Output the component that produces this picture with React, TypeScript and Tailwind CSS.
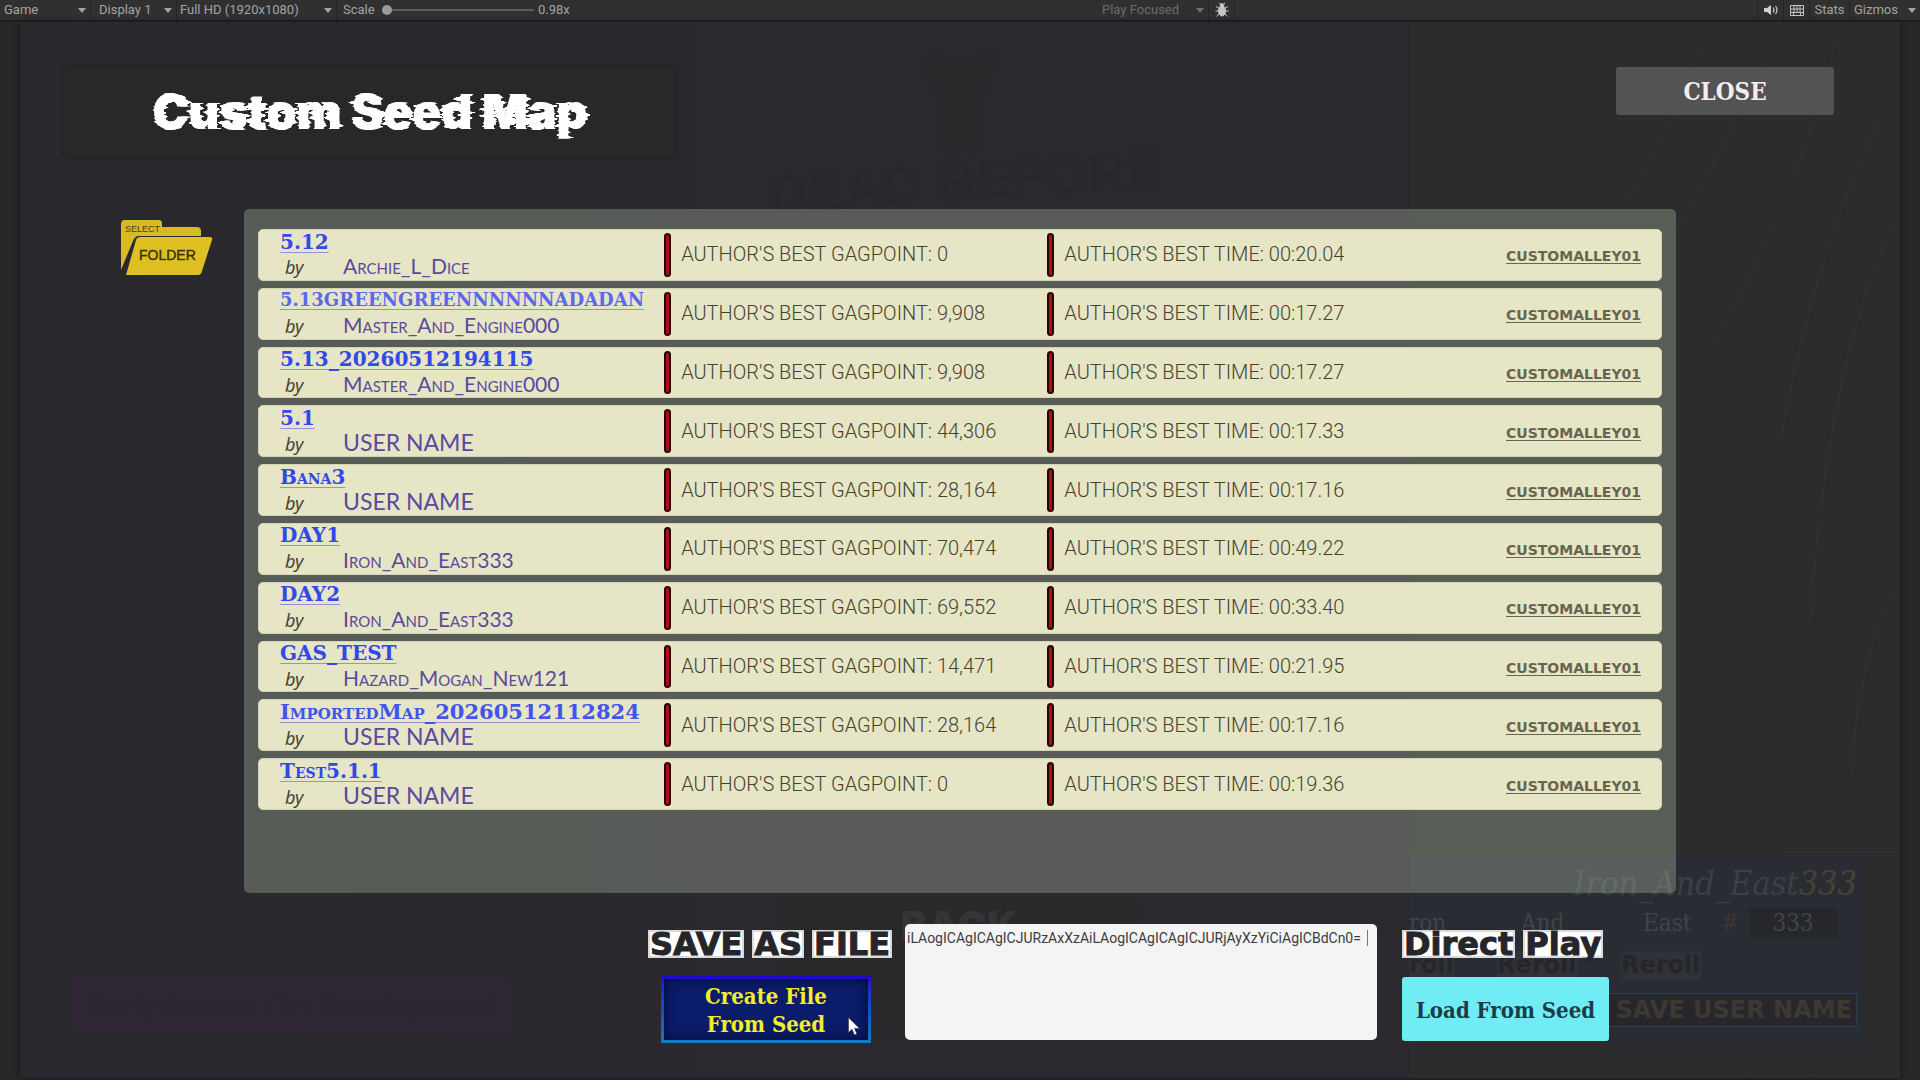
import React, { useState } from "react";

type MapEntry = {
  name: string;
  author: string;
  points: string;
  time: string;
  size?: "fit" | "tight";
};

const MAPS: MapEntry[] = [
  { name: "5.12", author: "Archie_L_Dice", points: "0", time: "00:20.04" },
  { name: "5.13GREENGREENNNNNNADADAN", author: "Master_And_Engine000", points: "9,908", time: "00:17.27", size: "tight" },
  { name: "5.13_20260512194115", author: "Master_And_Engine000", points: "9,908", time: "00:17.27" },
  { name: "5.1", author: "USER NAME", points: "44,306", time: "00:17.33" },
  { name: "Bana3", author: "USER NAME", points: "28,164", time: "00:17.16" },
  { name: "DAY1", author: "Iron_And_East333", points: "70,474", time: "00:49.22" },
  { name: "DAY2", author: "Iron_And_East333", points: "69,552", time: "00:33.40" },
  { name: "GAS_TEST", author: "Hazard_Mogan_New121", points: "14,471", time: "00:21.95" },
  { name: "ImportedMap_20260512112824", author: "USER NAME", points: "28,164", time: "00:17.16", size: "fit" },
  { name: "Test5.1.1", author: "USER NAME", points: "0", time: "00:19.36" },
];

const NAME_SIZES = {
  normal: "text-[20px] text-[#3148ea]",
  fit: "text-[21px] text-[#3f55ec]",
  tight: "text-[18px] text-[#5b68ec]",
};

function Caret() {
  return (
    <svg viewBox="0 0 8 5" className="pointer-events-none absolute right-1 top-2 h-[5px] w-2 fill-current" aria-hidden="true">
      <path d="M0 0h8L4 5z" />
    </svg>
  );
}

function Dropdown({ label, value, className }: { label: string; value: string; className: string }) {
  return (
    <div className={"relative h-full " + className}>
      <select aria-label={label} defaultValue={value} className="block h-full w-full appearance-none bg-transparent leading-5 outline-none">
        <option>{value}</option>
      </select>
      <Caret />
    </div>
  );
}

function Toolbar() {
  return (
    <div className="flex h-[21px] items-center border-b border-[#1b1b1b] bg-[#303030] font-['Roboto','Liberation_Sans',sans-serif] text-[13px] text-[#a3a3a3]">
      <Dropdown label="View" value="Game" className="w-[91px] border-r border-[#242424] pl-1" />
      <Dropdown label="Display" value="Display 1" className="w-[86px] border-r border-[#242424] pl-2" />
      <Dropdown label="Resolution" value="Full HD (1920x1080)" className="w-[160px] border-r border-[#242424] pl-[3px]" />
      <label htmlFor="scale" className="w-[41px] pl-[6px]">Scale</label>
      <input
        id="scale"
        type="range"
        min={0}
        max={100}
        defaultValue={0}
        className="ml-1 h-3 w-[152px] appearance-none bg-transparent [&::-webkit-slider-runnable-track]:h-[2px] [&::-webkit-slider-runnable-track]:bg-[#5c5c5c] [&::-webkit-slider-thumb]:-mt-1 [&::-webkit-slider-thumb]:h-[10px] [&::-webkit-slider-thumb]:w-[10px] [&::-webkit-slider-thumb]:appearance-none [&::-webkit-slider-thumb]:rounded-full [&::-webkit-slider-thumb]:bg-[#9a9a9a]"
      />
      <output htmlFor="scale" className="pl-1">0.98x</output>
      <div className="flex-1" />
      <Dropdown label="Play mode" value="Play Focused" className="w-[107px] border-r border-[#242424] text-[#6c6c6c]" />
      <button aria-label="Debug" className="flex h-full w-[26px] items-center justify-center border-r border-[#242424]">
        <svg viewBox="0 0 16 16" className="h-4 w-4" fill="#c4c4c4" stroke="#c4c4c4" aria-hidden="true">
          <ellipse cx="8" cy="9" rx="3.6" ry="5" />
          <circle cx="8" cy="3.6" r="2" />
          <path fill="none" d="M6.5 2.5 5 .8M9.500 2.500 11 .8M5 6 2 4.500M11 6l3-1.500M4.500 9H1.500M11.500 9h3M5 12l-2.500 2.500M11 12l2.500 2.500" />
        </svg>
      </button>
      <div className="w-[523px] self-stretch border-r border-[#242424]" />
      <button aria-label="Mute audio" className="flex h-full w-[26px] items-center justify-center border-r border-[#242424]">
        <svg viewBox="0 0 16 12" className="h-3 w-4" fill="#d0d0d0" aria-hidden="true">
          <path d="M1 4h3l4-3v10L4 8H1z" />
          <path d="M10 3.500q2 2.500 0 5M12.500 2q3 4 0 8" fill="none" stroke="#d0d0d0" strokeWidth="1.200" />
        </svg>
      </button>
      <button aria-label="Shortcuts" className="flex h-full w-[26px] items-center justify-center border-r border-[#242424]">
        <svg viewBox="0 0 14 11" className="h-[11px] w-[14px]" aria-hidden="true">
          <path d="M.5.5h13v10H.5zM.5 4h13M.5 7.500h13M4 .5V7.500M7 .5V7.500M10 .5V7.500M3.500 7.500v3M10.500 7.500v3" fill="none" stroke="#c4c4c4" />
        </svg>
      </button>
      <button className="h-full w-10 border-r border-[#242424]">Stats</button>
      <button className="relative h-full w-[70px] pl-1 text-left">
        Gizmos
        <Caret />
      </button>
    </div>
  );
}

function Backdrop() {
  return (
    <div aria-hidden="true" className="pointer-events-none absolute inset-0 select-none overflow-hidden bg-linear-to-r from-[#29292d] via-[#2b282e] via-40% to-[#2b282e]">
      <div className="absolute inset-y-0 right-0 w-[490px] bg-[#2c2b2d]" />
      <svg className="absolute right-0 top-0 h-full w-[420px]" viewBox="0 0 420 1056" preserveAspectRatio="none" fill="none" stroke="#313133">
        <path d="M300 0Q250 120 180 240M420 60Q340 200 300 420M420 190Q350 320 330 600M360 0Q330 150 230 330M230 0Q200 90 140 190M420 560Q380 620 370 760M420 830H300M420 920 260 1056M420 980 330 1056" />
      </svg>
      <svg className="absolute left-1/2 top-7 h-[106px] w-20 -translate-x-10" viewBox="0 0 80 106" fill="#29282a">
        <circle cx="14" cy="15" r="13" />
        <circle cx="66" cy="13" r="13" />
        <path d="M14 14q26-6 54 0l-2 32-8 8 4 44q-10 10-20 2-14 8-24 0l2-44-8-12z" />
      </svg>
      <div className="absolute left-1/2 top-[132px] -translate-x-[191px] -rotate-4 whitespace-nowrap font-['Liberation_Sans',sans-serif] text-[54px] font-bold leading-none text-[#28282a]">
        DEAD BEFORE
      </div>
      <div className="absolute bottom-10 left-1/2 h-[141px] w-[362px] -translate-x-[182px] border border-[#2f2830] bg-[#2a282b] pt-2 text-center font-['Inter',sans-serif] text-[40px] font-black leading-none text-[#353437]">
        BACK
      </div>
      <div className="absolute bottom-[45px] left-[50px] flex h-14 w-[440px] items-center justify-center bg-[#2e2733] font-['Liberation_Sans',sans-serif] text-[30px] text-[#29272b]">
        Early Access / In Development
      </div>
      <div className="absolute bottom-[36px] right-[35px] h-[187px] w-[456px] bg-[#2a2c34] font-['DejaVu_Serif_Condensed','DejaVu_Serif',serif]">
        <div className="pr-2 pt-2 text-right text-[34px] italic leading-[40px] text-[#3b4044]">
          Iron_And_East<span className="text-[#4a4034]">333</span>
        </div>
        <div className="grid grid-cols-[112px_122px_78px_28px_88px] pt-1 text-[24px] leading-8 text-[#424448]">
          <span>ron</span>
          <span>And</span>
          <span>East</span>
          <span className="text-[#3c3630]">#</span>
          <span className="bg-[#26272b] text-center">333</span>
        </div>
        <div className="grid grid-cols-[88px_124px_124px] pt-[14px] font-['DejaVu_Sans',sans-serif] text-[24px] font-bold leading-6 text-[#25262b]">
          <span><span className="bg-[#303238]">roll</span></span>
          <span><span className="bg-[#303238]">Reroll</span></span>
          <span><span className="bg-[#303238]">Reroll</span></span>
        </div>
        <div className="ml-auto mr-2 mt-4 w-[254px] border border-[#284050] bg-[#27272b] pr-1 text-right font-['DejaVu_Sans',sans-serif] text-[24px] font-bold leading-8 text-[#3d3832]">
          SAVE USER NAME
        </div>
      </div>
    </div>
  );
}

function FolderButton() {
  return (
    <button aria-label="Select folder" className="mt-[11px] h-14 w-[92px] shrink-0">
      <svg viewBox="0 0 92 56" className="block h-14 w-[92px]">
        <path d="M0 50V4q0-4 4-4h34q3 0 3 4v3h35q4 0 4 4v5H18q-4 0-6 5z" fill="#d8ba25" />
        <path d="M15 20q1-3 4-3h70q3 0 2 3L81 51q-1 4-4 4H5z" fill="#dfc022" />
        <text x="4" y="12" fontSize="9" fontFamily="Liberation Sans, Arial, sans-serif" fill="#4a3f0c">SELECT</text>
        <text x="18" y="40" fontSize="14" fontFamily="Liberation Sans, Arial, sans-serif" fill="#3a3208" stroke="#3a3208" strokeWidth="0.400">FOLDER</text>
      </svg>
    </button>
  );
}

function Divider() {
  return <span className="my-[3px] w-[7px] shrink-0 self-stretch rounded-sm border-2 border-[#240505] bg-[#b30c10]" />;
}

function MapRow({ entry }: { entry: MapEntry }) {
  const stat = "whitespace-nowrap pb-px pl-[10px] font-['Roboto','Liberation_Sans',sans-serif] font-light text-[20px] leading-6 text-[#45432f]";
  const allCaps = entry.author === entry.author.toUpperCase();
  return (
    <li className="grid grid-cols-[406fr_384fr_615fr] rounded-[5px] border border-[#d3d3b5] bg-[#e6e5c5]">
      <div className="min-w-0 whitespace-nowrap pl-[21px]">
        <div className="flex h-[23px] items-center font-['DejaVu_Serif',serif] font-bold leading-[22px]">
          <a
            href="#map"
            className={"underline decoration-[#8f93d8] decoration-1 underline-offset-3 [font-variant-caps:small-caps] " + NAME_SIZES[entry.size ?? "normal"]}
          >
            {entry.name}
          </a>
        </div>
        <div className="flex h-6 items-baseline pt-px leading-6">
          <span className="w-[63px] pl-[5px] font-['Noto_Sans','Open_Sans',sans-serif] text-[18px] italic text-[#46442f]">by</span>
          <span
            className={
              "font-['Lato',sans-serif] text-[#5a4a9e] [font-variant-caps:small-caps] " + (allCaps ? "text-[23px]" : "text-[21px]")
            }
          >
            {entry.author}
          </span>
        </div>
      </div>
      <div className="flex min-w-0 items-center">
        <Divider />
        <span className={stat}>AUTHOR&apos;S BEST GAGPOINT: {entry.points}</span>
      </div>
      <div className="flex min-w-0 items-center">
        <Divider />
        <span className={stat}>AUTHOR&apos;S BEST TIME: {entry.time}</span>
        <span className="ml-auto mr-[20px] mt-1 font-['DejaVu_Sans',sans-serif] text-[14px] font-bold text-[#66654f] underline decoration-1 underline-offset-2">
          CUSTOMALLEY01
        </span>
      </div>
    </li>
  );
}

function BoxedHeading({ words }: { words: string[] }) {
  return (
    <h2 className="flex gap-2 font-['DejaVu_Sans',sans-serif] text-[32px] font-bold leading-7 text-[#26252b]">
      {words.map((w) => (
        <span key={w} className="border-2 border-[#d9dadb] bg-white leading-6 [-webkit-text-stroke:1px_#26252b]">{w}</span>
      ))}
    </h2>
  );
}

export default function App() {
  const [seed, setSeed] = useState("iLAogICAgICAgICJURzAxXzAiLAogICAgICAgICJURjAyXzYiCiAgICBdCn0=");
  const serif = "font-['DejaVu_Serif_Condensed','DejaVu_Serif',serif] font-bold";
  return (
    <div className="flex min-h-screen flex-col bg-[#262626]">
      <svg width="0" height="0" className="absolute" aria-hidden="true">
        <filter id="tear" x="-5%" y="-5%" width="110%" height="110%">
          <feTurbulence type="fractalNoise" baseFrequency="0.015 0.3" numOctaves="1" seed="4" result="n" />
          <feColorMatrix in="n" type="matrix" values="1 0 0 0 0  0 0 0 0 0.5  0 0 1 0 0  0 0 0 0 1" result="m" />
          <feDisplacementMap in="SourceGraphic" in2="m" scale="24" xChannelSelector="R" yChannelSelector="G" result="d" />
          <feMerge>
            <feMergeNode in="SourceGraphic" />
            <feMergeNode in="d" />
          </feMerge>
        </filter>
      </svg>
      <Toolbar />
      <main className="relative mx-5 mb-[2px] mt-px flex flex-1 flex-col shadow-[0_0_4px_#151515]">
        <Backdrop />
        <header className="relative flex items-start justify-between pl-[42px] pr-[66px] pt-[42px]">
          <div className="flex h-24 w-[616px] items-center justify-center rounded-md border border-[#222223] bg-[#282829]">
            <h1 className="font-['Inter',sans-serif] text-[48px] font-black leading-none text-white [filter:url(#tear)]">Custom Seed Map</h1>
          </div>
          <button className={"mt-[3px] h-12 w-[218px] rounded-[3px] bg-[#535353] pt-[2px] text-[24px] text-[#f6ecee] " + serif}>CLOSE</button>
        </header>

        <section className="relative mt-[49px] flex items-start gap-[31px] pl-[101px] pr-[224px]">
          <FolderButton />
          <div className="h-[684px] min-w-0 flex-1 rounded-[5px] bg-[#c0d4b6]/30 px-[14px] pt-5">
            <ul className="grid h-[581px] auto-rows-fr gap-[7px]">
              {MAPS.map((m) => (
                <MapRow key={m.name} entry={m} />
              ))}
            </ul>
          </div>
        </section>

        <section className="relative mt-[31px] flex items-start justify-end pb-[34px] pr-[285px]">
          <div className="flex w-[257px] flex-col pt-[6px]">
            <BoxedHeading words={["SAVE", "AS", "FILE"]} />
            <button
              className={"relative ml-[13px] mt-[18px] h-[67px] w-[210px] bg-linear-to-b from-[#2200c8] to-[#1c78bc] p-[3px] text-[22px] leading-7 text-[#f3ee2c] " + serif}
            >
              <span className="block h-full bg-[#0b1c6a] pt-[3px] shadow-[inset_0_0_12px_#04092e]">
                Create File
                <br />
                From Seed
              </span>
              <svg viewBox="0 0 12 19" className="absolute left-[187px] top-[41px] h-[19px] w-3" aria-hidden="true">
                <path d="M.5.5v15l3.500-3.200L6.500 18l2.400-1.100L6.500 11.400h5z" fill="#fff" stroke="#26262c" strokeWidth="0.500" />
              </svg>
            </button>
          </div>
          <div className="relative h-[116px] w-[472px]">
            <textarea
              aria-label="Seed"
              value={seed}
              onChange={(e) => setSeed(e.target.value)}
              wrap="off"
              className="block h-full w-full resize-none overflow-hidden rounded-[5px] bg-[#f4f4f4] pl-[2px] pt-1 font-['Roboto','Liberation_Sans',sans-serif] text-[14px] leading-5 text-[#3c3c3c] outline-none"
            />
            <span className="absolute right-[9px] top-[6px] h-4 w-px bg-[#777]" />
          </div>
          <div className="ml-[25px] flex w-[213px] flex-col pt-[6px]">
            <BoxedHeading words={["Direct", "Play"]} />
            <button className={"mt-[19px] h-16 w-[207px] rounded-[3px] bg-[#70ecf4] pt-[2px] text-[22px] text-[#1b3c46] " + serif}>Load From Seed</button>
          </div>
        </section>
      </main>
    </div>
  );
}
